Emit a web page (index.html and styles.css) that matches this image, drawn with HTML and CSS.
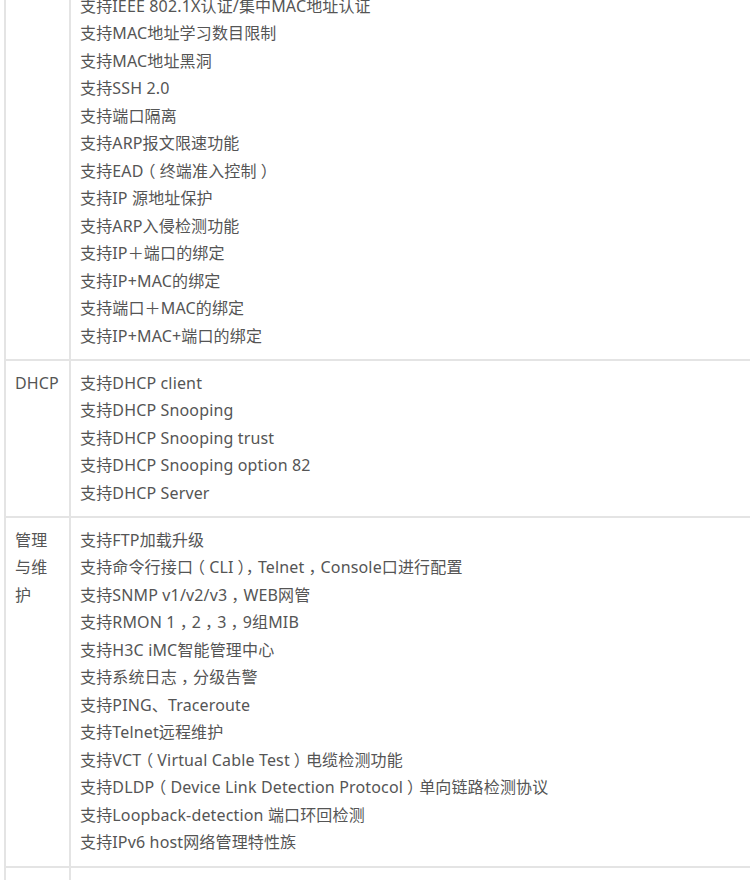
FILE: index.html
```html
<!DOCTYPE html>
<html lang="zh-CN">
<head>
<meta charset="utf-8">
<title>规格</title>
<link rel="stylesheet" href="styles.css">
</head>
<body>
<table class="spec">
  <tr>
    <td class="label"></td>
    <td class="items">
      <div>支持IEEE 802.1X认证/集中MAC地址认证</div>
      <div>支持MAC地址学习数目限制</div>
      <div>支持MAC地址黑洞</div>
      <div>支持SSH 2.0</div>
      <div>支持端口隔离</div>
      <div>支持ARP报文限速功能</div>
      <div>支持EAD<span class="po">（</span>终端准入控制<span class="pc">）</span></div>
      <div>支持IP 源地址保护</div>
      <div>支持ARP入侵检测功能</div>
      <div>支持IP＋端口的绑定</div>
      <div>支持IP+MAC的绑定</div>
      <div>支持端口＋MAC的绑定</div>
      <div>支持IP+MAC+端口的绑定</div>
    </td>
  </tr>
  <tr>
    <td class="label">DHCP</td>
    <td class="items">
      <div>支持DHCP client</div>
      <div>支持DHCP Snooping</div>
      <div>支持DHCP Snooping trust</div>
      <div>支持DHCP Snooping option 82</div>
      <div>支持DHCP Server</div>
    </td>
  </tr>
  <tr>
    <td class="label">管理与维护</td>
    <td class="items">
      <div>支持FTP加载升级</div>
      <div>支持命令行接口<span class="po">（</span>CLI<span class="pc">）</span><span class="pc">，</span>Telnet<span class="pc">，</span>Console口进行配置</div>
      <div>支持SNMP v1/v2/v3<span class="pc">，</span>WEB网管</div>
      <div>支持RMON 1<span class="pc">，</span>2<span class="pc">，</span>3<span class="pc">，</span>9组MIB</div>
      <div>支持H3C iMC智能管理中心</div>
      <div>支持系统日志<span class="pc">，</span>分级告警</div>
      <div>支持PING、Traceroute</div>
      <div>支持Telnet远程维护</div>
      <div>支持VCT<span class="po">（</span>Virtual Cable Test<span class="pc">）</span>电缆检测功能</div>
      <div>支持DLDP<span class="po">（</span>Device Link Detection Protocol<span class="pc">）</span>单向链路检测协议</div>
      <div>支持Loopback-detection 端口环回检测</div>
      <div>支持IPv6 host网络管理特性族</div>
    </td>
  </tr>
  <tr class="tail">
    <td class="label"></td>
    <td class="items"></td>
  </tr>
</table>
</body>
</html>
```
FILE: styles.css
```css
html, body {
  overflow: hidden;
}
body {
  margin: 0 0 0 4px;
  background: #fff;
  font-family: "Noto Sans", "Noto Sans CJK SC", sans-serif;
  font-size: 16px;
  color: #555;
}
.spec {
  border-collapse: collapse;
  width: 760px;
  margin-top: -18px;
  border: 2px solid #e4e4e4;
}
.spec td {
  border: 2px solid #e4e4e4;
  vertical-align: top;
  padding: 8.5px 9px 9px 9px;
  line-height: 27.5px;
  letter-spacing: 0.15px;
}
.spec .label {
  width: 45px;
}
.po {
  margin: 0 4px 0 -4px;
}
.pc {
  margin: 0 -4px 0 4px;
}
.tail td {
  height: 40px;
}
```
